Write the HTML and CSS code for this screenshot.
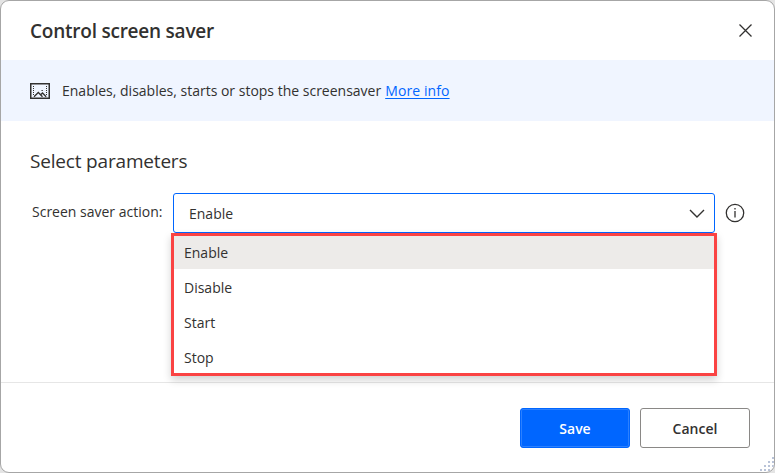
FILE: index.html
```
<!DOCTYPE html>
<html lang="en">
<head>
<meta charset="utf-8">
<title>Control screen saver</title>
<link rel="stylesheet" href="styles.css">
</head>
<body>
<main class="dialog">
  <header class="titlebar">
    <h1 class="title">Control screen saver</h1>
    <svg class="close" width="13" height="13" viewBox="0 0 13 13"><path d="M.5.5l12 12M12.5.5l-12 12"/></svg>
  </header>
  <section class="banner">
    <svg class="banner-icon" width="20" height="16" viewBox="0 0 20 16">
      <path class="frame" d="M.75.75h18.5v14.5H.75z"/>
      <path class="dots" d="M3.5 3v9M16.5 3v9"/>
      <path class="hills" d="M4 13.7l4.3-4.2 4.2 4.2M10.7 11.8l1.8-1.8 3.7 3.7"/>
      <path class="sun" d="M11.5 7.5h1.3"/>
    </svg>
    <p class="description"><span class="summary">Enables, disables, starts or stops the screensaver</span><a class="link" href="#">More info</a></p>
  </section>
  <section class="content">
    <h2 class="subtitle">Select parameters</h2>
    <div class="field">
      <span class="label">Screen saver action:</span>
      <div class="combo">
        <span class="value">Enable</span>
        <svg width="16" height="9" viewBox="0 0 16 9"><path d="M1 1l7 7 7-7"/></svg>
        <ul class="menu">
          <li class="option selected">Enable</li>
          <li class="option">Disable</li>
          <li class="option">Start</li>
          <li class="option">Stop</li>
        </ul>
      </div>
      <svg class="info" width="20" height="20" viewBox="0 0 20 20"><circle cx="10" cy="10" r="8.7"/><path d="M10 8v6.5M10 5v1.5"/></svg>
    </div>
  </section>
  <footer class="actions">
    <button class="button primary">Save</button>
    <button class="button">Cancel</button>
  </footer>
  <svg class="grip" width="14" height="14" viewBox="0 0 14 14"><path d="M12 0h2v2h-2zM12 4h2v2h-2zM8 4h2v2h-2zM12 8h2v2h-2zM8 8h2v2h-2zM4 8h2v2h-2zM12 12h1v2h-1zM8 12h2v2h-2zM4 12h2v2h-2zM0 12h2v2h-2z"/></svg>
</main>
</body>
</html>
```
FILE: styles.css
```
* { box-sizing: border-box; }
body {
  margin: 0;
  background: #e4e4e4;
  color: #323130;
  font: 14px/20px "Open Sans", "Noto Sans", sans-serif;
}
h1, h2, p, ul { margin: 0; padding: 0; }
svg { fill: none; stroke: #323130; flex: none; }
.dialog {
  position: relative;
  display: flex;
  flex-direction: column;
  width: 775px;
  height: 473px;
  border: 1px solid #a6a6a6;
  border-radius: 9px;
  background: #fff;
  overflow: hidden;
}
.titlebar {
  display: flex;
  align-items: center;
  justify-content: space-between;
  height: 59px;
  padding: 0 22px 0 29px;
}
.title { font-size: 19px; line-height: 26px; font-weight: 600; letter-spacing: -.23px; }
.close { stroke-width: 1.3; }
.banner {
  display: flex;
  align-items: center;
  gap: 12px;
  height: 61px;
  padding-left: 29px;
  background: #f0f5ff;
}
.frame { stroke-width: 1.5; }
.dots { stroke-dasharray: 1 1; }
.hills { stroke-width: 1.3; }
.description { display: flex; gap: 4px; }
.link { color: #0066ff; letter-spacing: .1px; text-underline-offset: 2px; }
.content { flex: 1; padding: 27px 0 0 29px; }
.subtitle { font-size: 19px; line-height: 26px; font-weight: 400; letter-spacing: -.18px; }
.field { display: flex; align-items: center; height: 40px; margin-top: 19px; }
.label { width: 143px; padding: 0 0 2px 2px; white-space: nowrap; }
.combo {
  position: relative;
  display: flex;
  align-items: center;
  justify-content: space-between;
  width: 542px;
  height: 40px;
  padding: 0 9px 0 15px;
  border: 1px solid #0066ff;
  border-radius: 3px;
}
.combo svg { stroke-width: 1.4; }
.value { padding-top: 2px; }
.menu {
  position: absolute;
  top: 39px;
  left: -3px;
  width: 546px;
  height: 143px;
  border: 3px solid #fa4343;
  background: #fff;
  box-shadow: 0 4px 8px rgba(0, 0, 0, .18);
  list-style: none;
}
.option { height: 35px; padding-left: 10px; line-height: 37px; }
.selected { height: 33px; line-height: 33px; background: #edebe9; }
.info { margin: 0 0 1px 10px; stroke-width: 1.3; }
.actions {
  display: flex;
  justify-content: flex-end;
  gap: 10px;
  height: 90px;
  padding: 25px 24px 0 0;
  border-top: 1px solid #e6e6e6;
}
.button {
  width: 110px;
  height: 40px;
  padding: 2px 0 0;
  border: 1px solid #8a8886;
  border-radius: 3px;
  background: #fff;
  color: #323130;
  font: 600 14px/20px "Open Sans", "Noto Sans", sans-serif;
}
.primary { border-color: #0066ff; background: #0066ff; color: #fff; box-shadow: inset 0 0 0 1px #2b80ff; }
.grip { position: absolute; right: 0; bottom: 1px; fill: #b9c3d8; stroke: none; }
```
